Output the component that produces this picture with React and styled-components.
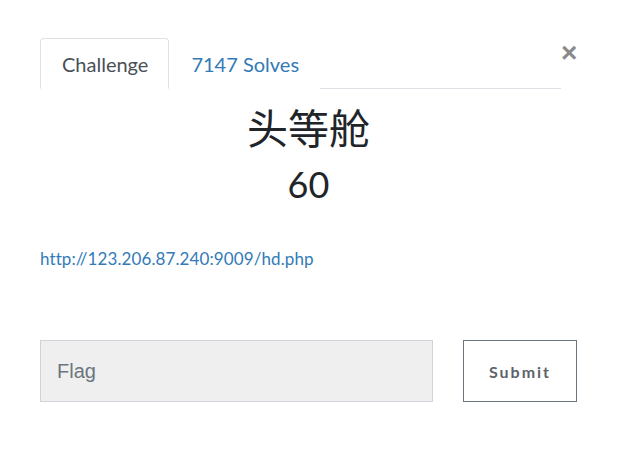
import React from 'react';
import styled, { createGlobalStyle } from 'styled-components';

const GlobalStyle = createGlobalStyle`
  body {
    margin: 0;
    background: #fff;
    font-family: Lato, "Noto Sans CJK SC", sans-serif;
    color: #212529;
  }
`;

const Modal = styled.div`
  width: 537px;
  padding: 38px 0 0 40px;
`;

const Header = styled.div`
  display: flex;
  align-items: flex-start;
`;

const Tabs = styled.div`
  flex: 1;
  display: flex;
  border-bottom: 1px solid #dee2e6;
  height: 50px;
`;

const Tab = styled.div`
  box-sizing: border-box;
  height: 51px;
  padding: 0 20px 0 21px;
  display: flex;
  align-items: center;
  font-size: 20px;
  color: ${p => (p.active ? '#495057' : '#337ab7')};
  background: #fff;
  border: 1px solid ${p => (p.active ? '#dee2e6' : 'transparent')};
  border-bottom-color: ${p => (p.active ? '#fff' : 'transparent')};
  border-radius: 4px 4px 0 0;
`;

const Close = styled.button`
  width: 16px;
  padding: 0;
  border: none;
  background: none;
  font-family: "Liberation Sans", sans-serif;
  font-size: 28px;
  font-weight: bold;
  line-height: 30px;
  color: #8a8a8a;
  cursor: pointer;
`;

const Title = styled.h1`
  margin: 14px 0 0;
  text-align: center;
  font-weight: 400;
  font-size: 41px;
  line-height: 52px;
  color: #212529;
`;

const Points = styled.div`
  margin-top: 6px;
  text-align: center;
  font-size: 36px;
  line-height: 46px;
  color: #212529;
`;

const Link = styled.a`
  display: block;
  margin-top: 42px;
  font-size: 17px;
  letter-spacing: 0.1px;
  line-height: 20px;
  color: #337ab7;
  text-decoration: none;
`;

const Form = styled.div`
  display: grid;
  grid-template-columns: 393px 114px;
  column-gap: 30px;
  margin-top: 71px;
`;

const FlagInput = styled.input`
  box-sizing: border-box;
  height: 62px;
  padding: 0 16px;
  border: 1px solid #ced4da;
  background: #efefef;
  font-family: "Liberation Sans", sans-serif;
  font-size: 20px;
  color: #495057;
  outline: none;
  &::placeholder {
    color: #6c757d;
  }
`;

const SubmitButton = styled.button`
  box-sizing: border-box;
  height: 62px;
  border: 1px solid #6c757d;
  background: #fff;
  font-family: Lato, sans-serif;
  font-weight: 700;
  font-size: 16px;
  letter-spacing: 2px;
  color: #5c636a;
  cursor: pointer;
`;

const App = () => (
  <>
    <GlobalStyle />
    <Modal>
      <Header>
        <Tabs>
          <Tab active>Challenge</Tab>
          <Tab>7147 Solves</Tab>
        </Tabs>
        <Close>×</Close>
      </Header>
      <Title>头等舱</Title>
      <Points>60</Points>
      <Link href="#">http://123.206.87.240:9009/hd.php</Link>
      <Form>
        <FlagInput placeholder="Flag" />
        <SubmitButton>Submit</SubmitButton>
      </Form>
    </Modal>
  </>
);

export default App;
